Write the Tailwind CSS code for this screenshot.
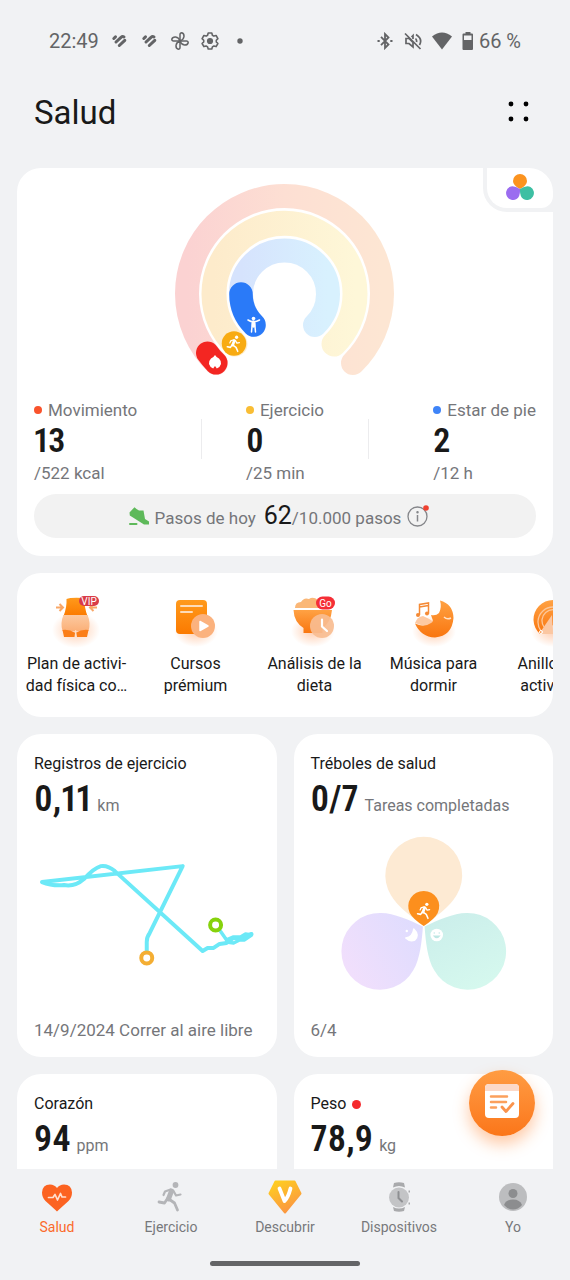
<!DOCTYPE html>
<html lang="es">
<head>
  <meta charset="UTF-8">
  <meta name="viewport" content="width=device-width, initial-scale=1.0">
  <title>Salud</title>
  <script src="https://cdn.jsdelivr.net/npm/@tailwindcss/browser@4"></script>
</head>
<body class="flex h-screen flex-col overflow-hidden bg-[#f1f2f4] font-['Roboto',sans-serif] text-[#191919]">

  <!-- Shared symbols -->
  <svg class="absolute size-0">
    <defs>
      <linearGradient id="orange" x1="0" y1="0" x2="0" y2="1"><stop offset="0" stop-color="#ffa244"/><stop offset="1" stop-color="#f9760f"/></linearGradient>
      <linearGradient id="amber" x1="0" y1="0" x2="0" y2="1"><stop offset="0" stop-color="#ff9a1c"/><stop offset="1" stop-color="#fb7a00"/></linearGradient>
      <linearGradient id="peach" x1="0" y1="0" x2="0" y2="1"><stop offset="0" stop-color="#fcc9a0"/><stop offset="1" stop-color="#fbb078"/></linearGradient>
      <radialGradient id="glow"><stop offset="0" stop-color="#ff7a2a" stop-opacity=".38"/><stop offset="1" stop-color="#ff7a2a" stop-opacity="0"/></radialGradient>
    </defs>
    <symbol id="runner" viewBox="0 0 28 32">
      <circle cx="19.500" cy="4" r="2.900" fill="currentColor"/>
      <g fill="none" stroke="currentColor" stroke-linecap="round" stroke-linejoin="round">
        <path d="M14.500 8.500L9 10.500L7.500 14" stroke-width="2.200"/>
        <path d="M17.500 10L20 14.500L24.500 13.500" stroke-width="2.200"/>
        <path d="M15.500 10L12.500 18" stroke-width="5"/>
        <path d="M13.500 18.500L18.500 22L21.500 29" stroke-width="2.800"/>
        <path d="M11.500 17.500L8.500 22L3 21" stroke-width="2.800"/>
      </g>
    </symbol>
    <symbol id="stripes" viewBox="0 0 18 18">
      <g fill="none" stroke="currentColor" stroke-width="3" stroke-linecap="round">
        <path d="M2.800 6.500L4.500 4.900"/><path d="M5 10L10 5.300Q11.500 4 13 5"/><path d="M8.300 13.500L13.800 8.300"/>
      </g>
    </symbol>
  </svg>

  <main class="relative min-h-0 flex-1 overflow-hidden">
    <!-- Status bar -->
    <div class="flex h-[82px] items-center justify-between px-[49px] text-[20px] text-[#636466]">
      <div class="flex items-center gap-3">
        <span>22:49</span>
        <svg class="size-[18px]"><use href="#stripes"/></svg>
        <svg class="size-[18px]"><use href="#stripes"/></svg>
        <svg class="size-[18px]" viewBox="0 0 18 18" fill="none" stroke="currentColor" stroke-width="1.500" stroke-linejoin="round">
          <path id="blade" d="M9 9V2.500Q9 .8 10.700 .8Q13.200 1.500 13 4.500Q12.500 8 9 9Z"/>
          <use href="#blade" transform="rotate(90 9 9)"/><use href="#blade" transform="rotate(180 9 9)"/><use href="#blade" transform="rotate(270 9 9)"/>
        </svg>
        <svg class="size-[18px]" viewBox="0 0 18 18" fill="none" stroke="currentColor" stroke-width="1.600" stroke-linejoin="round">
          <path d="M7.200 1h3.600l.6 2.200 1.500.9 2.200-.6 1.800 3.100-1.600 1.600v1.700l1.600 1.600-1.800 3.100-2.200-.6-1.500.9-.6 2.100H7.200l-.6-2.100-1.500-.9-2.200.6-1.800-3.100 1.600-1.600V8.200L1.100 6.600l1.800-3.100 2.200.6 1.500-.9z"/>
          <circle cx="9" cy="9" r="2.300" fill="currentColor"/>
        </svg>
        <svg class="size-[18px]" viewBox="0 0 18 18"><circle cx="9" cy="9" r="2.700" fill="currentColor"/></svg>
      </div>
      <div class="flex items-center gap-[10px]">
        <svg class="size-[18px]" viewBox="0 0 18 18" fill="none" stroke="currentColor" stroke-width="1.800">
          <path d="M5 4.800L12.500 12.500L9 16V2L12.500 5.500L5 13.200"/><path d="M1.500 9h2.200M14.300 9h2.200" stroke-width="2.200"/>
        </svg>
        <svg class="size-[18px]" viewBox="0 0 18 18" fill="none" stroke="currentColor" stroke-width="1.700">
          <path d="M1 1.500L16.500 17M2 6.500h3L9 10.500V15L5 11.500H2zM7.500 5L9 3.500V7M11.500 6.500Q13 8 12.500 10M12 2.500Q19 7 15.500 13"/>
        </svg>
        <svg class="h-[18px] w-5" viewBox="0 0 20 18" fill="currentColor"><path d="M0 4.500Q10 -3.500 20 4.500L10 17.500Z"/></svg>
        <div class="flex items-center gap-[5px]">
          <svg class="h-[18px] w-3" viewBox="0 0 12 18" fill="currentColor"><path fill-rule="evenodd" d="M3.500 0h5v1.500H10q1 0 1 1V17q0 1-1 1H1.500q-1 0-1-1V2.500q0-1 1-1h2zM2 3.500V8h7.500V3.500z"/></svg>
          <span>66 %</span>
        </div>
      </div>
    </div>

    <!-- Header -->
    <header class="flex h-[86px] items-start justify-between pt-[11px] pr-10 pl-[34px]">
      <h1 class="text-[33px] leading-10">Salud</h1>
      <button aria-label="Más opciones" class="mt-2">
        <svg class="h-[22px] w-6" viewBox="0 0 24 22"><circle cx="5" cy="3" r="2.400"/><circle cx="20" cy="3" r="2.400"/><circle cx="5" cy="18" r="2.400"/><circle cx="20" cy="18" r="2.400"/></svg>
      </button>
    </header>

    <div class="flex flex-col gap-[17px] px-[17px]">
      <!-- Activity rings -->
      <section class="relative rounded-3xl bg-white px-[17px] pt-[7px] pb-[18px]">
        <button aria-label="Tréboles" class="absolute top-0 right-0 rounded-bl-3xl bg-[#f1f2f4] pb-[4px] pl-[4px]">
          <span class="flex h-10 w-[66px] items-center justify-center rounded-tr-3xl rounded-br-xl rounded-bl-[20px] bg-white">
            <svg class="h-8 w-8" viewBox="0 0 32 32">
              <path d="M16 17Q9 13.500 9 9A7 7 0 0 1 23 9Q23 13.500 16 17Z" fill="#fb931f"/>
              <path d="M16 17Q9 13.500 9 9A7 7 0 0 1 23 9Q23 13.500 16 17Z" fill="#9b6cf0" transform="rotate(-120 16 17)"/>
              <path d="M16 17Q9 13.500 9 9A7 7 0 0 1 23 9Q23 13.500 16 17Z" fill="#3dbfa3" transform="rotate(120 16 17)"/>
            </svg>
          </span>
        </button>

        <svg class="mx-auto h-[210px] w-60" viewBox="0 0 240 210" fill="none" stroke-linecap="round">
          <defs>
            <linearGradient id="ringA"><stop offset="0" stop-color="#fbd2d2"/><stop offset=".5" stop-color="#fddfd3"/><stop offset="1" stop-color="#fde6d3"/></linearGradient>
            <linearGradient id="ringB"><stop offset="0" stop-color="#fdebcb"/><stop offset="1" stop-color="#fef7d8"/></linearGradient>
            <linearGradient id="ringC"><stop offset="0" stop-color="#d6e3fd"/><stop offset="1" stop-color="#d8f1fe"/></linearGradient>
          </defs>
          <path d="M51 188A97.500 97.500 0 1 1 188 188" stroke="url(#ringA)" stroke-width="24"/>
          <path d="M70 169A70.500 70.500 0 1 1 169 169" stroke="url(#ringB)" stroke-width="25"/>
          <path d="M89 150A43.500 43.500 0 1 1 150 150" stroke="url(#ringC)" stroke-width="24"/>
          <path d="M51 188Q46 183 42.500 178" stroke="#f32622" stroke-width="23"/>
          <path d="M69 168.500V168.500" stroke="#f8ab12" stroke-width="24.500"/>
          <path d="M89 150A43.500 43.500 0 0 1 76 119" stroke="#2a7af8" stroke-width="23.500"/>
          <!-- flame -->
          <path d="M50 180Q51.500 182.500 54 183.500Q56.500 186 56 189Q55 192.500 51.800 193.500Q51 192 50 191Q49 192 48.200 193.500Q45 192.500 44 189Q43.500 186 46 183.500Q48.500 182.500 50 180Z" fill="#fff"/>
          <!-- standing figure -->
          <circle cx="88.500" cy="143.500" r="1.800" fill="#fff"/>
          <path d="M83 145Q88.500 148.500 94.500 145M87.300 148L86.500 157M89.700 148L90.500 157" stroke="#fff" stroke-width="1.500"/>
          <path d="M88.500 147V151" stroke="#fff" stroke-width="3.500"/>
          <svg x="60" y="160" width="17" height="18" class="text-white"><use href="#runner"/></svg>
        </svg>

        <div class="mt-[13px] flex text-[17px] leading-6 text-[#75767a]">
          <div class="flex flex-1 justify-start">
            <div>
              <p class="flex items-center gap-1.5"><span class="size-2 rounded-full bg-[#f9532c]"></span>Movimiento</p>
              <p class="font-['Roboto_Condensed','Roboto'] text-[34px] leading-9 font-semibold proportional-nums text-[#191919]">13</p>
              <p class="mt-[3px]">/522 kcal</p>
            </div>
          </div>
          <div class="mt-[21px] h-10 w-px bg-[#ececee]"></div>
          <div class="flex flex-1 justify-center">
            <div>
              <p class="flex items-center gap-1.5"><span class="size-2 rounded-full bg-[#f9bd34]"></span>Ejercicio</p>
              <p class="font-['Roboto_Condensed','Roboto'] text-[34px] leading-9 font-semibold proportional-nums text-[#191919]">0</p>
              <p class="mt-[3px]">/25 min</p>
            </div>
          </div>
          <div class="mt-[21px] h-10 w-px bg-[#ececee]"></div>
          <div class="flex flex-1 justify-end">
            <div>
              <p class="flex items-center gap-1.5 whitespace-nowrap"><span class="size-2 rounded-full bg-[#3f84f8]"></span>Estar de pie</p>
              <p class="font-['Roboto_Condensed','Roboto'] text-[34px] leading-9 font-semibold proportional-nums text-[#191919]">2</p>
              <p class="mt-[3px]">/12 h</p>
            </div>
          </div>
        </div>

        <button class="mt-[9px] flex h-11 w-full items-center justify-center gap-1.5 rounded-full bg-[#f2f2f2] pr-3 text-[17px] text-[#75767a]">
          <svg class="size-5" viewBox="0 0 20 20" fill="#5eb95a"><path d="M.5 6.500L5.500 1.200L7.500 3L10 4.500H14.500L16 13L20 15.500V18.500H15L9.500 15L.8 9.500ZM1 17h6.500a1 1 0 0 1 0 2H1a1 1 0 0 1 0-2z"/></svg>
          <span class="flex items-baseline">Pasos de hoy<span class="ml-2 text-[25px] leading-8 text-[#191919]">62</span>/10.000 pasos</span>
          <svg class="size-[22px]" viewBox="0 0 22 22" fill="none" stroke="#85868a" stroke-width="1.300">
            <circle cx="10.500" cy="11.500" r="9.500"/><path d="M10.500 10V16.500" stroke-width="1.500"/><circle cx="10.500" cy="7.200" r=".6" fill="#85868a"/><circle cx="19" cy="3" r="2.800" fill="#ef4130" stroke="none"/>
          </svg>
        </button>
      </section>

      <!-- Shortcuts -->
      <nav class="flex h-36 overflow-hidden rounded-3xl bg-white pt-4 text-center text-[16px] leading-[22px]">
        <a href="#" class="w-[119px] shrink-0">
          <svg class="mx-auto h-16 w-16" viewBox="0 0 64 64">
            <ellipse cx="31" cy="41" rx="24" ry="18" fill="url(#glow)"/>
            <path d="M21.500 10Q26 8 39.500 9Q39 18 42.500 27H18.500Q22 18 21.500 10Z" fill="url(#amber)"/>
            <path d="M18.500 26H42.500Q46 34 43.500 42H17.500Q15 34 18.500 26Z" fill="url(#peach)"/>
            <path d="M17.500 41Q24 40 30.500 44Q37 40 43.500 41L42 48H32L31.300 44L30 44L29.500 48H19Z" fill="#fb7e18"/>
            <path d="M30.700 41V48" stroke="#ffe3cc"/>
            <path d="M11 18.500H17.500M14.500 15L18 18.500L14.500 22M52 18.500H46M48.500 15L45 18.500L48.500 22" fill="none" stroke="#f9a767" stroke-width="2"/>
            <rect x="34" y="7" width="20" height="10" rx="5" fill="#d93c48"/>
            <text x="44" y="15.500" text-anchor="middle" font-size="10" fill="#fff" font-family="Roboto">VIP</text>
          </svg>
          Plan de activi-<br>dad física co…
        </a>
        <a href="#" class="w-[119px] shrink-0">
          <svg class="mx-auto h-16 w-16" viewBox="0 0 64 64">
            <ellipse cx="32" cy="42" rx="22" ry="16" fill="url(#glow)"/>
            <rect x="12" y="11" width="31" height="34" rx="4" fill="url(#amber)"/>
            <path d="M17 17H38M17 23H28" stroke="#fddcb8" stroke-width="2" stroke-linecap="round"/>
            <circle cx="39" cy="37" r="12" fill="#fbb27e"/>
            <path d="M36 32.500V41.500L44 37Z" fill="#fff" stroke="#fff" stroke-width="1.500" stroke-linejoin="round"/>
          </svg>
          Cursos<br>prémium
        </a>
        <a href="#" class="w-[119px] shrink-0">
          <svg class="mx-auto h-16 w-16" viewBox="0 0 64 64">
            <ellipse cx="30" cy="42" rx="22" ry="16" fill="url(#glow)"/>
            <path d="M12 19Q12 13 18 13Q21 8 26 10Q30 7 35 11Q44 11 48 19Z" fill="#fab777"/>
            <path d="M10.500 21H49Q48 33 39.500 39V44H20.500V39Q11 33 10.500 21Z" fill="url(#orange)"/>
            <circle cx="39" cy="37" r="12" fill="#f8bd91" fill-opacity=".92"/>
            <path d="M39 30.500V37.500L44 42" fill="none" stroke="#fff" stroke-width="2.200" stroke-linecap="round"/>
            <rect x="33" y="7.500" width="19" height="13" rx="6.500" fill="#f52e36"/>
            <text x="42.500" y="17.500" text-anchor="middle" font-size="10" fill="#fff" font-family="Roboto">Go</text>
          </svg>
          Análisis de la<br>dieta
        </a>
        <a href="#" class="w-[119px] shrink-0">
          <svg class="mx-auto h-16 w-16" viewBox="0 0 64 64">
            <ellipse cx="32" cy="42" rx="22" ry="16" fill="url(#glow)"/>
            <path d="M13 34Q15 28 21 27Q28 30 32 33Q31 38 22 37Z" fill="#fdc9a2"/>
            <path d="M38 11.500Q51 15 51.500 29Q50 47 33 48.500Q19 48 13 34.500Q22 39 29 34Q32 33 30 29L29 26Q34 27 37 24Q40 18 38 11.500Z" fill="url(#orange)"/>
            <path d="M42 28Q45 31 49 29" fill="none" stroke="#ffe2c8" stroke-width="1.500"/>
            <path d="M17.500 26V15.500L26.500 14V24.500M17.500 18L26.500 16.500" fill="none" stroke="#f58a35" stroke-width="1.500"/>
            <circle cx="16" cy="26" r="2" fill="#f58a35"/><circle cx="25" cy="24.500" r="2" fill="#f58a35"/>
          </svg>
          Música para<br>dormir
        </a>
        <a href="#" class="w-[119px] shrink-0">
          <svg class="mx-auto h-16 w-16" viewBox="0 0 64 64">
            <ellipse cx="32" cy="42" rx="22" ry="16" fill="url(#glow)"/>
            <path d="M19 45A19.500 19.500 0 1 1 45 45L32 36Z" fill="url(#orange)"/>
            <path d="M20 42A15 15 0 1 1 44 42M23 38A11 11 0 1 1 41 38" fill="none" stroke="#fcc79a" stroke-width="1.300"/>
            <path d="M31 26L20 42V45L32 45Z" fill="#fbc7a2"/>
            <circle cx="20" cy="43" r="1.500" fill="none" stroke="#fff"/>
          </svg>
          Anillos de<br>actividad
        </a>
      </nav>

      <!-- Health cards -->
      <div class="grid grid-cols-2 gap-[17px] text-[16px]">
        <section class="rounded-3xl bg-white px-[17px] pt-[19px] pb-4">
          <h2 class="leading-[22px]">Registros de ejercicio</h2>
          <p class="mt-1 h-10 leading-10 text-[#75767a]"><span class="mr-1.5 font-['Roboto_Condensed','Roboto'] text-[36px] font-semibold proportional-nums text-[#191919]">0,11</span>km</p>
          <svg class="h-[200px] w-full" viewBox="0 0 226 200" fill="none" stroke-linecap="round" stroke-linejoin="round">
            <g stroke="#6ce9f7" stroke-width="4">
              <path d="M113 138V123Q113 118 116 114L149 47L8 63Q18 67 30 66Q41 68 50 60Q60 49 67 47Q74 46 81 52L169 132L174 129L180 129L186 125L193 124L200 119L208 119L218 115"/>
              <path d="M186 111L193 121L200 118L207 118L212 115L218 116L211 121L206 121L200 124L193 123" stroke-width="3.500"/>
            </g>
            <circle cx="113" cy="139" r="5.500" fill="#fff" stroke="#f4ae33" stroke-width="4"/>
            <circle cx="182" cy="106" r="5.500" fill="#fff" stroke="#86d20c" stroke-width="4"/>
          </svg>
          <p class="text-[17px] leading-[22px] whitespace-nowrap text-[#75767a]">14/9/2024 Correr al aire libre</p>
        </section>

        <section class="rounded-3xl bg-white px-[17px] pt-[19px] pb-4">
          <h2 class="leading-[22px]">Tréboles de salud</h2>
          <p class="mt-1 h-10 leading-10 whitespace-nowrap text-[#75767a]"><span class="mr-1.5 font-['Roboto_Condensed','Roboto'] text-[36px] font-semibold proportional-nums text-[#191919]">0/7</span>Tareas completadas</p>
          <svg class="h-[200px] w-full" viewBox="0 0 226 200">
            <defs>
              <linearGradient id="mint" x1="0" y1="1" x2=".6" y2="0"><stop offset="0" stop-color="#c9ecea"/><stop offset="1" stop-color="#d5f8ee"/></linearGradient>
              <linearGradient id="lilac" x1="0" y1="1" x2="0" y2="0"><stop offset="0" stop-color="#dedcfe"/><stop offset="1" stop-color="#f1dffc"/></linearGradient>
            </defs>
            <g transform="translate(113 107)">
              <path d="M0 0C12 -9 27 -20 33 -31A38.500 38.500 0 1 0 -33 -31C-27 -20 -12 -9 0 0Z" fill="#fdead3"/>
              <path d="M0 -1C12 -9 27 -20 33 -31A38.500 38.500 0 1 0 -33 -31C-27 -20 -12 -9 0 -1Z" fill="url(#mint)" transform="rotate(120)"/>
              <path d="M0 -1C12 -9 27 -20 33 -31A38.500 38.500 0 1 0 -33 -31C-27 -20 -12 -9 0 -1Z" fill="url(#lilac)" transform="rotate(-120)"/>
              <path d="M0 0Q11 -7 14 -13A15.500 15.500 0 1 0 -14 -13Q-11 -7 0 0Z" fill="#fc8f1d"/>
            </g>
            <svg x="105" y="83" width="16" height="18" class="text-white"><use href="#runner"/></svg>
            <path d="M103 110Q109 116 104 121Q99 123 95 119Q102 118 103 110Z" fill="#fff" stroke="#fff" stroke-width="1.500" stroke-linejoin="round"/>
            <circle cx="96" cy="112" r="1.200" fill="#fff"/>
            <circle cx="126" cy="116" r="6.300" fill="#fff"/>
            <path d="M122 116.500Q126 122 130 116.500Z" fill="#bfe7e4"/><circle cx="123.500" cy="114" r=".7" fill="#bfe7e4"/><circle cx="128.500" cy="114" r=".7" fill="#bfe7e4"/>
          </svg>
          <p class="text-[17px] leading-[22px] text-[#75767a]">6/4</p>
        </section>

        <section class="h-36 rounded-3xl bg-white px-[17px] pt-[19px]">
          <h2 class="leading-[22px]">Corazón</h2>
          <p class="mt-1 h-10 leading-10 text-[#75767a]"><span class="mr-1.5 font-['Roboto_Condensed','Roboto'] text-[36px] font-semibold proportional-nums text-[#191919]">94</span>ppm</p>
        </section>
        <section class="h-36 rounded-3xl bg-white px-[17px] pt-[19px]">
          <h2 class="flex items-center gap-1.5 leading-[22px]">Peso<span class="size-[9px] rounded-full bg-[#f52a2d]"></span></h2>
          <p class="mt-1 h-10 leading-10 text-[#75767a]"><span class="mr-1.5 font-['Roboto_Condensed','Roboto'] text-[36px] font-semibold proportional-nums text-[#191919]">78,9</span>kg</p>
        </section>
      </div>
    </div>

    <!-- Floating button -->
    <button aria-label="Tareas" class="absolute right-[35px] bottom-[33px] flex size-[66px] items-center justify-center rounded-full bg-linear-to-b from-[#ff9c42] to-[#fb7618] shadow-[0_8px_16px_rgba(255,120,30,0.4)]">
      <svg class="mb-1 size-[34px]" viewBox="0 0 34 34">
        <rect width="34" height="34" rx="4" fill="#fff"/><path d="M0 7V4Q0 0 4 0H30Q34 0 34 4V7Z" fill="#fcd9c8"/>
        <path d="M6 12.500H22M6 18H21M6 23.500H11" stroke="#fba05c" stroke-width="2.500" stroke-linecap="round"/>
        <path d="M17 23L21 27.500L28 19.500" fill="none" stroke="#fa934c" stroke-width="2.800" stroke-linecap="round" stroke-linejoin="round"/>
      </svg>
    </button>
  </main>

  <!-- Bottom navigation -->
  <footer class="flex h-[111px] shrink-0 flex-col justify-between pt-[11px] pb-[14px]">
    <nav class="grid grid-cols-5 text-center text-[14px] leading-5 text-[#77787b]">
      <a href="#" class="text-[#fb6a2b]">
        <svg class="mx-auto mb-[3px] h-[34px] w-[34px]" viewBox="0 0 34 34">
          <path d="M17 31.500Q15.500 30 5.500 21Q2 17.500 2 12.500Q2.500 4.500 10 4.500Q14.500 4.500 17 8Q19.500 4.500 24 4.500Q31.500 4.500 32 12.500Q32 17.500 28.500 21Q18.500 30 17 31.500Z" fill="#fc6321"/>
          <path d="M8.500 17.500H13L15 14.500L17.500 20L20.500 13.500L22 17H25.500" fill="none" stroke="#ffe0d0" stroke-width="1.700" stroke-linecap="round" stroke-linejoin="round"/>
        </svg>
        Salud
      </a>
      <a href="#">
        <svg class="mx-auto mb-[3px] h-[34px] w-[34px] text-[#b4b5b8]"><use href="#runner" x="2" y="1" width="28" height="32"/></svg>
        Ejercicio
      </a>
      <a href="#">
        <svg class="mx-auto mb-[3px] h-[34px] w-[34px]" viewBox="0 0 34 34">
          <defs><linearGradient id="gem" x1="0" y1="0" x2=".5" y2="1"><stop offset="0" stop-color="#ffd21e"/><stop offset="1" stop-color="#fb9840"/></linearGradient></defs>
          <path d="M7.500 1.500H26.500L32.500 13.500L17 32.500L1.500 13.500Z" fill="url(#gem)" stroke="url(#gem)" stroke-width="2" stroke-linejoin="round"/>
          <path d="M11.500 8.500L16.500 21Q20 18 22.500 8.500" fill="none" stroke="#fff" stroke-width="3.800" stroke-linecap="round" stroke-linejoin="round"/>
        </svg>
        Descubrir
      </a>
      <a href="#">
        <svg class="mx-auto mb-[3px] h-[34px] w-[34px]" viewBox="0 0 34 34">
          <path d="M12 3Q17 1.500 22 3L23 7.500Q17 4.500 11 7.500ZM12 31Q17 32.500 22 31L23 27Q17 30 11 27Z" fill="#a9aaac"/>
          <circle cx="17" cy="17.500" r="10" fill="#c3c4c6"/>
          <path d="M16.500 12V18L20 21.500" fill="none" stroke="#8e8f92" stroke-width="2" stroke-linecap="round"/>
          <path d="M26.500 11.500H28M26.500 23.500H28" stroke="#a9aaac" stroke-width="2"/>
        </svg>
        Dispositivos
      </a>
      <a href="#">
        <svg class="mx-auto mb-[3px] h-[34px] w-[34px]" viewBox="0 0 34 34">
          <circle cx="17" cy="17" r="14" fill="#bcbdbf"/><circle cx="17" cy="13.500" r="4.500" fill="#8c8d8f"/>
          <path d="M8 25Q10 19.500 17 19.500Q24 19.500 26 25Q22 29.500 17 29.500Q12 29.500 8 25Z" fill="#8c8d8f"/>
        </svg>
        Yo
      </a>
    </nav>
    <div class="mx-auto h-[5px] w-[150px] rounded-full bg-[#646567]"></div>
  </footer>
</body>
</html>
